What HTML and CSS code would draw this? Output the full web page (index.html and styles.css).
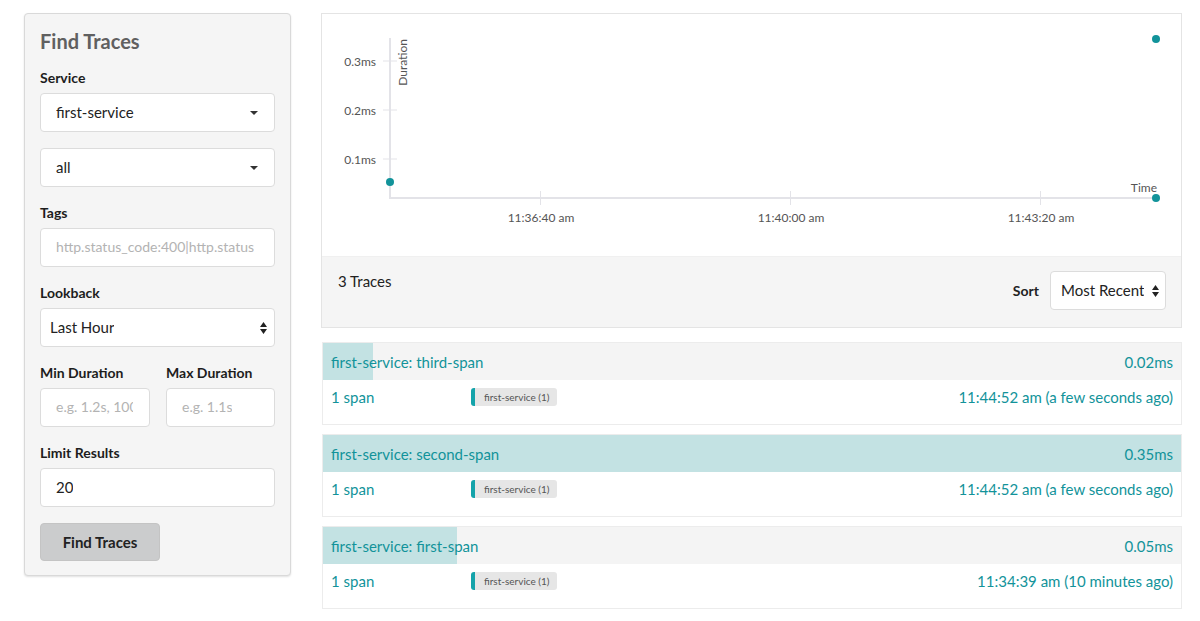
FILE: index.html
```html
<!DOCTYPE html>
<html>
<head>
<meta charset="utf-8">
<title>Find Traces</title>
<link rel="stylesheet" href="styles.css">
</head>
<body>
<div class="page">
  <aside class="search-panel">
    <h2 class="panel-title">Find Traces</h2>
    <div class="field">
      <div class="label">Service</div>
      <div class="select"><span class="value">first-service</span><svg class="caret" width="8" height="4" viewBox="0 0 8 4"><path d="M0 0h8L4 4z" fill="#333"/></svg></div>
    </div>
    <div class="field">
      <div class="select"><span class="value">all</span><svg class="caret" width="8" height="4" viewBox="0 0 8 4"><path d="M0 0h8L4 4z" fill="#333"/></svg></div>
    </div>
    <div class="field">
      <div class="label">Tags</div>
      <div class="input placeholder"><span class="value">http.status_code:400|http.status</span></div>
    </div>
    <div class="field">
      <div class="label">Lookback</div>
      <div class="select compact"><span class="value">Last Hour</span><svg class="updown" width="7" height="12" viewBox="0 0 7 12"><path d="M0 5h7L3.5 0zM0 7h7L3.5 12z" fill="#222"/></svg></div>
    </div>
    <div class="field row">
      <div class="col">
        <div class="label">Min Duration</div>
        <div class="input placeholder"><span class="value">e.g. 1.2s, 100ms</span></div>
      </div>
      <div class="col">
        <div class="label">Max Duration</div>
        <div class="input placeholder"><span class="value">e.g. 1.1s</span></div>
      </div>
    </div>
    <div class="field">
      <div class="label">Limit Results</div>
      <div class="input"><span class="value">20</span></div>
    </div>
    <button class="btn">Find Traces</button>
  </aside>

  <main class="results">
    <section class="chart-card">
      <svg class="chart" width="859" height="242" viewBox="0 0 859 242">
        <g stroke="#e3e3e8" stroke-width="2">
          <line x1="68" y1="24" x2="68" y2="185"/>
          <line x1="67" y1="184" x2="836" y2="184"/>
        </g>
        <g stroke="#e3e3e8" stroke-width="1">
          <line x1="61" y1="47" x2="75" y2="47"/>
          <line x1="61" y1="96" x2="75" y2="96"/>
          <line x1="61" y1="145" x2="75" y2="145"/>
          <line x1="218.5" y1="177" x2="218.5" y2="191"/>
          <line x1="468.5" y1="177" x2="468.5" y2="191"/>
          <line x1="718.5" y1="177" x2="718.5" y2="191"/>
        </g>
        <g class="tick-label" text-anchor="end">
          <text x="54" y="52">0.3ms</text>
          <text x="54" y="101">0.2ms</text>
          <text x="54" y="150">0.1ms</text>
        </g>
        <g class="tick-label" text-anchor="middle">
          <text x="219" y="208">11:36:40 am</text>
          <text x="469" y="208">11:40:00 am</text>
          <text x="719" y="208">11:43:20 am</text>
        </g>
        <text class="tick-label" text-anchor="end" transform="translate(85,25) rotate(-90)">Duration</text>
        <text class="tick-label" text-anchor="end" x="835" y="178">Time</text>
        <g fill="#12939a">
          <circle cx="68" cy="168" r="4"/>
          <circle cx="834" cy="25" r="4"/>
          <circle cx="834" cy="184" r="4"/>
        </g>
      </svg>
      <div class="results-bar">
        <h3 class="count">3 Traces</h3>
        <div class="sort">
          <span class="sort-label">Sort</span>
          <div class="select sort-select"><span class="value">Most Recent</span><svg class="updown" width="7" height="12" viewBox="0 0 7 12"><path d="M0 5h7L3.5 0zM0 7h7L3.5 12z" fill="#222"/></svg></div>
        </div>
      </div>
    </section>

    <ul class="trace-list">
      <li class="trace">
        <div class="trace-head">
          <div class="dur-bar" style="width:50px"></div>
          <span class="trace-name">first-service: third-span</span>
          <span class="trace-dur">0.02ms</span>
        </div>
        <div class="trace-body">
          <span class="spans">1 span</span>
          <span class="pill">first-service (1)</span>
          <span class="trace-time">11:44:52 am (a few seconds ago)</span>
        </div>
      </li>
      <li class="trace">
        <div class="trace-head">
          <div class="dur-bar" style="width:100%"></div>
          <span class="trace-name">first-service: second-span</span>
          <span class="trace-dur">0.35ms</span>
        </div>
        <div class="trace-body">
          <span class="spans">1 span</span>
          <span class="pill">first-service (1)</span>
          <span class="trace-time">11:44:52 am (a few seconds ago)</span>
        </div>
      </li>
      <li class="trace">
        <div class="trace-head">
          <div class="dur-bar" style="width:134px"></div>
          <span class="trace-name">first-service: first-span</span>
          <span class="trace-dur">0.05ms</span>
        </div>
        <div class="trace-body">
          <span class="spans">1 span</span>
          <span class="pill">first-service (1)</span>
          <span class="trace-time">11:34:39 am (10 minutes ago)</span>
        </div>
      </li>
    </ul>
  </main>
</div>
</body>
</html>
```

FILE: styles.css
```css
* { box-sizing: border-box; }
html, body { margin: 0; padding: 0; background: #fff; }
body {
  font-family: Lato, "Open Sans", "Liberation Sans", sans-serif;
  color: #222;
  font-size: 14px;
}
.page {
  display: flex;
  align-items: flex-start;
  gap: 30px;
  padding: 13px 18px 0 24px;
}

/* Search panel */
.search-panel {
  width: 267px;
  flex: none;
  background: #f5f5f5;
  border: 1px solid #d9d9d9;
  border-radius: 4px;
  box-shadow: 0 1px 2px rgba(0,0,0,0.12);
  padding: 16px 15px 14px 15px;
}
.panel-title {
  margin: 0 0 16px;
  font-size: 20px;
  line-height: 22px;
  font-weight: 700;
  color: #606060;
}
.field { margin-bottom: 16px; }
.field.row { display: flex; gap: 16px; }
.field.row .col { flex: 1; min-width: 0; }
.field.row .col:first-child { flex: 0 0 110px; }
.label {
  font-weight: 700;
  font-size: 14px;
  line-height: 20px;
  margin-bottom: 5px;
  color: #1d1d1d;
  white-space: nowrap;
}
.select, .input {
  height: 39px;
  background: #fff;
  border: 1px solid #dcdcdc;
  border-radius: 4px;
  display: flex;
  align-items: center;
  justify-content: space-between;
  padding: 0 16px 0 15px;
  font-size: 15px;
  line-height: 20px;
  color: #222;
  white-space: nowrap;
}
.value {
  display: block;
  min-width: 0;
  overflow: hidden;
  white-space: nowrap;
  margin-top: -1px;
}
.input.placeholder {
  color: #b3b3b3;
  font-size: 14px;
  justify-content: flex-start;
}
.select.compact { padding: 0 7px 0 9px; }
.caret { flex: none; }
.updown { flex: none; }
.btn {
  display: block;
  width: 120px;
  height: 38px;
  border: 1px solid #c4c4c4;
  border-radius: 4px;
  background: #cbcccd;
  font-family: inherit;
  font-weight: 700;
  font-size: 15px;
  color: #222;
  padding: 0;
}

/* Results */
.results {
  width: 861px;
  flex: none;
}
.chart-card {
  border: 1px solid #e4e4e4;
  background: #fff;
}
.chart { display: block; }
.tick-label {
  font-family: Lato, "Open Sans", sans-serif;
  font-size: 12px;
  fill: #555;
}
.results-bar {
  background: #f5f5f5;
  height: 71px;
  display: flex;
  justify-content: space-between;
  align-items: flex-start;
  padding: 14px 15px 0 16px;
  border-top: 1px solid #f0f0f0;
}
.count {
  margin: 0;
  font-size: 15px;
  font-weight: 400;
  line-height: 20px;
  color: #222;
}
.sort {
  display: flex;
  align-items: center;
  gap: 11px;
}
.sort-label { font-weight: 700; font-size: 14px; color: #222; }
.sort-select {
  width: 116px;
  padding: 0 6px 0 10px;
  font-size: 15px;
}

.trace-list {
  list-style: none;
  margin: 14px 0 0;
  padding: 0;
  display: flex;
  flex-direction: column;
  gap: 9px;
}
.trace {
  border: 1px solid #ececec;
  margin-left: 1px;
}
.trace-head {
  position: relative;
  background: #f4f4f4;
  height: 37px;
  display: flex;
  align-items: center;
  justify-content: space-between;
  padding: 0 8px 0 8px;
  font-size: 15px;
  color: #12939a;
}
.dur-bar {
  position: absolute;
  left: 0;
  top: 0;
  bottom: 0;
  background: #c3e2e3;
}
.trace-name, .trace-dur { position: relative; }
.trace-body {
  background: #fff;
  height: 44px;
  display: flex;
  align-items: flex-start;
  padding: 7px 8px 0 8px;
  font-size: 15px;
  color: #12939a;
  line-height: 20px;
}
.spans { width: 140px; flex: none; }
.pill {
  margin-top: 1px;
  height: 18px;
  line-height: 18px;
  font-size: 10px;
  color: #555;
  background: #e6e6e6;
  border-left: 4px solid #14a3aa;
  border-radius: 3px;
  padding: 0 8px 0 9px;
}
.trace-time { margin-left: auto; }
```
